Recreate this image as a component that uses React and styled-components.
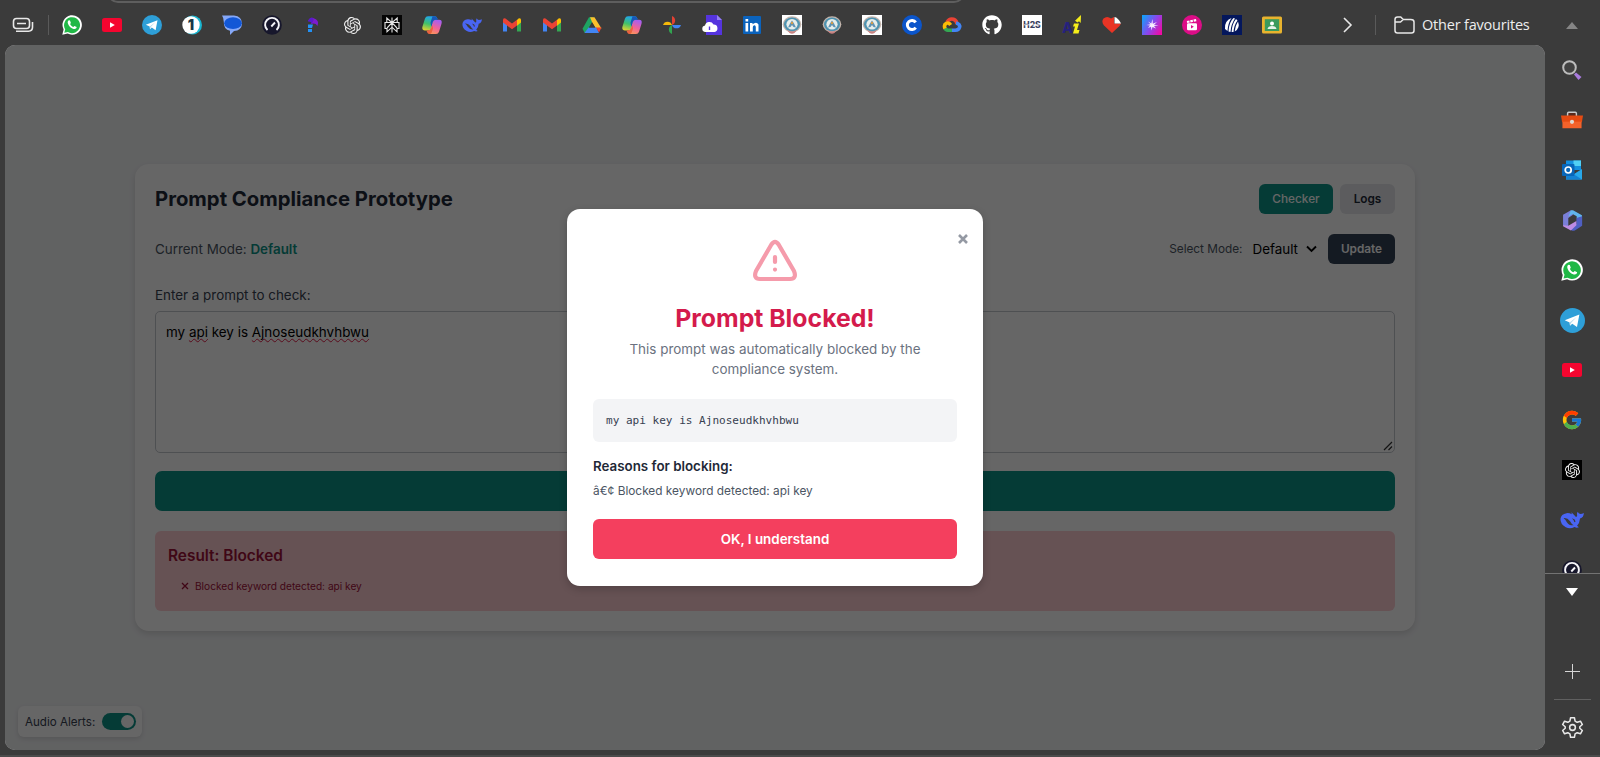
import React from "react";
import styled, { createGlobalStyle } from "styled-components";
import { FaGithub } from "react-icons/fa";
import { FcGoogle } from "react-icons/fc";
import { SiOpenai } from "react-icons/si";

const GlobalStyle = createGlobalStyle`
  * { box-sizing: border-box; }
  body { margin: 0; background: #3b3b3b; font-family: Inter, "Liberation Sans", sans-serif; overflow: hidden; }
  h1, h2, h3, p, ul { margin: 0; padding: 0; }
  button { font-family: inherit; border: 0; padding: 0; }
  svg { display: block; flex: none; }
`;

/* ---------- browser frame ---------- */
const Browser = styled.div`
  display: flex;
  width: 1600px;
  height: 755px;
`;
const MainColumn = styled.div`
  width: 1545px;
  display: flex;
  flex-direction: column;
`;
const AddressStrip = styled.div`
  height: 3px;
  overflow: hidden;
  padding-left: 107px;
`;
const AddressEdge = styled.div`
  width: 858px;
  height: 22px;
  margin-top: -19px;
  border: 2px solid #5e5e5e;
  border-radius: 12px;
`;
const BookmarksBar = styled.div`
  height: 42px;
  display: flex;
  align-items: center;
  padding: 2px 0 0 12px;
`;
const Divider = styled.span`
  width: 1px;
  height: 20px;
  margin-left: ${(p) => p.$left || 0}px;
  background: #5a5a5a;
`;
const Bookmarks = styled.div`
  display: flex;
  gap: 20px;
  margin-left: 13px;
`;
const Overflow = styled.span`
  margin: 0 21px 0 58px;
`;
const Folder = styled.div`
  display: flex;
  align-items: center;
  gap: 7px;
  margin-left: 18px;
  color: #ededed;
  font: 400 14.5px "Open Sans", "Noto Sans", sans-serif;
  letter-spacing: -0.2px;
  white-space: nowrap;
`;
const FolderName = styled.span`
  padding-bottom: 1px;
`;
const WindowEdge = styled.div`
  height: 2px;
  width: 1600px;
  background: #4b4b4b;
`;

/* ---------- side bar ---------- */
const SideBar = styled.aside`
  width: 55px;
  display: flex;
  flex-direction: column;
  align-items: center;
`;
const ScrollUp = styled.div`
  height: 45px;
  padding: 22px 1px 0 0;
`;
const SideApps = styled.div`
  width: 55px;
  height: 529px;
  padding-right: 1px;
  overflow: hidden;
  border-bottom: 1px solid #737373;
`;
const SideApp = styled.div`
  height: 50px;
  display: flex;
  align-items: center;
  justify-content: center;
`;
const SideTools = styled.div`
  display: flex;
  flex-direction: column;
  align-items: center;
  padding: 14px 1px 0 0;
`;
const SideRule = styled.div`
  width: 37px;
  height: 1px;
  background: #606060;
  margin: 20px 0 16px;
`;
const PlusSlot = styled.div`
  margin-top: 68px;
`;

/* ---------- page ---------- */
const Page = styled.main`
  position: relative;
  margin-left: 5px;
  width: 1540px;
  height: 705px;
  border-radius: 10px;
  overflow: hidden;
  background: #f3f4f6;
  display: flex;
  align-items: center;
  justify-content: center;
`;
const Card = styled.section`
  width: 1280px;
  height: 467px;
  padding: 20px;
  border-radius: 14px;
  background: #fff;
  box-shadow: 0 3px 6px rgba(0, 0, 0, 0.12);
`;
const Row = styled.div`
  display: flex;
  align-items: center;
  justify-content: space-between;
  height: 30px;
  margin-bottom: 20px;
`;
const Group = styled.div`
  display: flex;
  align-items: center;
  gap: ${(p) => p.$gap || 0}px;
`;
const Title = styled.h1`
  font-size: 20.3px;
  line-height: 28px;
  font-weight: 700;
  color: #1f2937;
`;
const tones = {
  teal: ["#0d9488", "#fff"],
  gray: ["#e5e7eb", "#1f2937"],
  slate: ["#334155", "#fff"],
};
const SmallButton = styled.button`
  height: 30px;
  width: ${(p) => p.$width}px;
  border-radius: 6px;
  font-size: 11.8px;
  font-weight: ${(p) => (p.$tone === "teal" ? 500 : 600)};
  background: ${(p) => tones[p.$tone][0]};
  color: ${(p) => tones[p.$tone][1]};
`;
const Mode = styled.p`
  font-size: 13.4px;
  color: #4b5563;
  strong { font-weight: 600; color: #0d9488; }
`;
const SelectLabel = styled.span`
  font-size: 11.8px;
  color: #4b5563;
`;
const Select = styled.div`
  display: flex;
  align-items: center;
  gap: 8px;
  margin: 0 11px 0 10px;
  font-size: 13.4px;
  color: #000;
`;
const FieldLabel = styled.label`
  display: block;
  font-size: 13.4px;
  line-height: 20px;
  color: #374151;
  margin: 21px 0 6px;
`;
const PromptField = styled.div`
  height: 142px;
  display: flex;
  justify-content: space-between;
  border: 1px solid #c4c8ce;
  border-radius: 5px;
  padding: 10px 1px 1px 10px;
  font-size: 13.45px;
  line-height: 20px;
  color: #000;
`;
const Misspelt = styled.span`
  text-decoration: underline wavy #e11d48 1px;
  text-underline-offset: 1px;
  text-decoration-skip-ink: none;
`;
const Grip = styled.svg`
  align-self: flex-end;
`;
const CheckButton = styled.button`
  display: block;
  width: 100%;
  height: 40px;
  margin: 18px 0 20px;
  border-radius: 7px;
  background: #0d9488;
`;
const Result = styled.div`
  height: 80px;
  padding: 14px 13px;
  border-radius: 6px;
  background: #ffccd3;
  color: #9f1239;
`;
const ResultTitle = styled.h2`
  font-size: 15.4px;
  line-height: 22px;
  font-weight: 600;
`;
const ResultItem = styled.p`
  display: flex;
  align-items: center;
  gap: 6px;
  margin: 11px 0 0 13px;
  font-size: 10.15px;
  line-height: 16px;
`;
const AudioAlerts = styled.div`
  position: absolute;
  left: 13px;
  bottom: 13px;
  width: 124px;
  height: 31px;
  display: flex;
  align-items: center;
  gap: 7px;
  padding-left: 7px;
  border-radius: 6px;
  background: #fff;
  box-shadow: 0 2px 5px rgba(0, 0, 0, 0.12);
  font-size: 11.6px;
  color: #374151;
  white-space: nowrap;
`;
const Toggle = styled.span`
  width: 34px;
  height: 17px;
  border-radius: 9px;
  background: #0d9488;
  display: flex;
  justify-content: flex-end;
  padding: 2px;
`;
const Knob = styled.span`
  width: 13px;
  height: 13px;
  border-radius: 50%;
  background: #fff;
`;

/* ---------- dialog ---------- */
const Backdrop = styled.div`
  position: absolute;
  inset: 0;
  display: flex;
  align-items: center;
  justify-content: center;
  background: rgba(0, 0, 0, 0.6);
`;
const Dialog = styled.div`
  position: relative;
  width: 416px;
  height: 377px;
  padding: 24px 26px 27px;
  border-radius: 13px;
  background: #fff;
  box-shadow: 0 3px 8px rgba(0, 0, 0, 0.2);
  display: flex;
  flex-direction: column;
`;
const Close = styled.span`
  position: absolute;
  top: 25px;
  right: 15px;
`;
const WarningIcon = styled.svg`
  align-self: center;
`;
const DialogTitle = styled.h2`
  margin-top: 15px;
  font-size: 24.8px;
  line-height: 32px;
  font-weight: 700;
  text-align: center;
  color: #d41b4c;
`;
const DialogText = styled.p`
  width: 320px;
  align-self: center;
  margin-top: 5px;
  font-size: 13.45px;
  line-height: 20px;
  text-align: center;
  color: #6b7280;
`;
const PromptQuote = styled.div`
  height: 43px;
  margin-top: 20px;
  padding: 0 13px;
  display: flex;
  align-items: center;
  border-radius: 6px;
  background: #f3f4f6;
  color: #374151;
  font: 11.05px "DejaVu Sans Mono", monospace;
`;
const ReasonsTitle = styled.h3`
  margin-top: 14px;
  font-size: 13.35px;
  line-height: 20px;
  font-weight: 600;
  color: #1f2937;
`;
const Reason = styled.p`
  margin-top: 6px;
  font-size: 11.85px;
  line-height: 18px;
  color: #4b5563;
`;
const Confirm = styled.button`
  height: 40px;
  margin-top: auto;
  border-radius: 6px;
  background: #f43f5e;
  color: #fff;
  font-size: 13.4px;
  font-weight: 600;
`;

/* ---------- icons ---------- */
const Icon = ({ size = 20, children }) => (
  <svg width={size} height={size} viewBox="0 0 20 20">{children}</svg>
);
const Glyph = styled.span`
  width: 20px;
  height: 20px;
  display: flex;
  align-items: center;
  justify-content: center;
  background: ${(p) => p.$bg || "none"};
  color: #f2f2f2;
`;
const WhatsAppLogo = ({ size }) => (
  <Icon size={size}>
    <path d="M.3 19.800 1.600 14.500A9.700 9.700 0 1 1 5.600 18.500Z" fill="#fff" />
    <path d="m2.300 17.800.9-3.500A8 8 0 1 1 5.900 17Z" fill="#20b846" />
    <path d="M7 5.300c-1.300.5-1.700 2-.9 3.700 1 2.500 3 4.300 5.500 5 1.700.4 3-.4 3.100-1.900l-2.300-1.200-1.100 1.200c-1.600-.7-2.500-1.600-3.200-3l.8-1.200L8 5.400Z" fill="#fff" />
  </Icon>
);
const YouTubeLogo = () => (
  <Icon>
    <rect x="0" y="3" width="20" height="14" rx="2.500" fill="#f5052f" />
    <path d="m8 7.300 4.800 2.700L8 12.700Z" fill="#fff" />
  </Icon>
);
const TelegramLogo = ({ size }) => (
  <Icon size={size}>
    <circle cx="10" cy="10" r="10" fill="#2e9fd8" />
    <path d="M3.800 9.800 15.500 5.200 13.600 15.200 9.800 12.500 8 14.200 7.700 11.500Z" fill="#fff" />
    <path d="m7.700 11.500 5.600-4.300-4.300 4.600-1 2.400Z" fill="#b5d9ec" />
  </Icon>
);
const OneLogo = () => (
  <Icon>
    <circle cx="10.500" cy="10" r="9.500" fill="#19b7d2" />
    <circle cx="9" cy="10" r="8.700" fill="#fff" />
    <text x="8.900" y="15.200" textAnchor="middle" fontFamily="Inter" fontSize="14" fontWeight="900" fill="#173748">1</text>
  </Icon>
);
const MessagesLogo = () => (
  <Icon>
    <path d="M0 .5H12Q20 1 20 9 19.500 15.500 12 16L8 20V15.800Q1.500 14.500 1.800 7 1.800 3 0 .5Z" fill="#85a8f8" />
    <ellipse cx="11" cy="8.200" rx="8.800" ry="5.900" fill="#1257d6" />
  </Icon>
);
const SpeedLogo = () => (
  <Icon>
    <circle cx="10" cy="10" r="9.800" fill="#17172c" />
    <path d="M5.500 15A6.900 6.900 0 1 1 14.500 15M9.300 11.500 13 7.500" fill="none" stroke="#f4f4f8" strokeWidth="1.900" />
  </Icon>
);
const HookLogo = () => (
  <Icon>
    <path d="M6 5.500Q9 .5 12 4L10 8.500Q8.500 6 6 6.500Z" fill="#5b19cf" />
    <path d="M11 3Q18 5 15.500 11 13 7 8 9.500Q12.500 6 11 3Z" fill="#7d1bd0" />
    <path d="M6 9.500h5L10 13H6zM6 14h4v3H6z" fill="#2391f4" />
  </Icon>
);
const PerplexityLogo = () => (
  <Icon>
    <rect width="20" height="20" fill="#050505" />
    <path d="M10 2.500v15M4.800 3v4.500h10.400V3L10 7.700ZM3 7.500h14v6h-2v3.300l-5-4.600-5 4.600v-3.300H3ZM10 7.700l-5 5.300M10 7.700l5 5.300" fill="none" stroke="#e5e5e5" strokeWidth="1.100" />
  </Icon>
);
const CopilotLogo = () => (
  <Icon>
    <defs>
      <linearGradient id="copLeft" x1=".4" y1="0" x2=".1" y2="1">
        <stop offset="0" stopColor="#20a5ee" /><stop offset=".5" stopColor="#40c06a" /><stop offset="1" stopColor="#f0d32c" />
      </linearGradient>
      <linearGradient id="copRight" x1=".6" y1="0" x2=".2" y2="1">
        <stop offset="0" stopColor="#a65ff0" /><stop offset=".5" stopColor="#f0629a" /><stop offset="1" stopColor="#fb9a55" />
      </linearGradient>
    </defs>
    <path d="M6 1.200h7q2 0 2.500 2.800L12 5.500 9.300 13q-.7 2.500-3.300 2.500H3Q-.5 15.500.500 11.500L3 3.500q.7-2.300 3-2.300Z" fill="url(#copLeft)" />
    <path d="M14 19H8q-2 0-2.500-2.800L8.500 14.500 10.700 7Q11.400 4.700 14 4.700h3q3.500 0 2.500 4L17 16.700q-.7 2.300-3 2.300Z" fill="url(#copRight)" />
    <path d="M10.500 1.200H13q2 0 2.700 3.500H14q-2.500 0-3.200 2L9.300 12 8.500 7.500Z" fill="#1757b8" />
    <path d="M4.500 15.500H6q2.600 0 3.300-2.500l.9-3 .8 3.500-1.300 4Q9.200 19 7.500 19 5.500 19 4.500 15.500Z" fill="#e9633f" />
  </Icon>
);
const WhaleLogo = ({ size }) => (
  <Icon size={size}>
    <path d="M9.500 3.500q2 2 3.800 3.900 1-.2 1-1-.5-2 .4-3.200.8 1.600 2.200 1.800 1.500 0 3-.8-.2 3.800-3.200 4.500-.3 3.700-2.500 6l1.500 1.300q-1.600.8-3.600-.1-3.700 2-7.300.2Q.2 13.600.4 9 .9 5 5.500 4.300q2-.3 4.300.9Z" fill="#4965f2" />
    <path d="M3 8.500q3-.5 5.400 2.500 1.400 2.700 3 3.400-3.500.5-5.700-2.600Q4.500 9.500 3 8.500ZM10 8.800q2.300-.2 3 2.400l-1 .6Q11.500 9.800 10 8.800Z" fill="#3b3b3b" />
  </Icon>
);
const GmailLogo = () => (
  <Icon>
    <path d="M1 5V16.500h4V8Z" fill="#4285f4" />
    <path d="M19 5V16.500h-4V8Z" fill="#34a853" />
    <path d="M15 4.900 16.500 3.600q2.500-1 2.500 1.400v2.500l-4 3.200Z" fill="#fbbc04" />
    <path d="M1 5Q1 2.600 3.500 3.600L10 8.500l5-3.700v5.700l-5 3.800-5-3.800-4-3Z" fill="#ea4335" />
  </Icon>
);
const DriveLogo = () => (
  <Icon>
    <path d="M7 2.200h4.500L10.200 7 4.500 17 2.700 18 .5 13.700Z" fill="#1ea362" />
    <path d="M8 2.200h4.500L19.500 13.500H14L10 7Z" fill="#fbc02d" />
    <path d="M6.500 12.500h8l2.500 5.500H2.500Z" fill="#4285f4" />
    <path d="M14 12.500h5.500L17 17.500Z" fill="#ea4335" />
    <path d="m10 7.500 3 5H7Z" fill="#3b3b3b" />
  </Icon>
);
const PhotosLogo = () => (
  <Icon>
    <path d="M10 10V1a4.800 4.800 0 0 1 0 9Z" fill="#e34133" />
    <path d="M10 10H1a4.700 4.700 0 0 1 9 0Z" fill="#f6b90a" />
    <path d="M10 10v9a4.800 4.800 0 0 1 0-9Z" fill="#32a350" />
    <path d="M10 10h9a4.700 4.700 0 0 1-9 0Z" fill="#4285f4" />
  </Icon>
);
const CloudDocLogo = () => (
  <Icon>
    <path d="M4 0h11l5 5v15H4Z" fill="#5534de" />
    <path d="M15 0v5h5Z" fill="#9580f5" />
    <path d="M3 17a3.300 3.300 0 0 1 0-6.500A4.600 4.600 0 0 1 11.500 9.500a3.800 3.800 0 0 1 1 7.500Z" fill="#fff" />
    <path d="M7.500 15v-3.500" stroke="#5534de" strokeWidth="1.400" />
  </Icon>
);
const LinkedInLogo = () => (
  <Icon>
    <rect x="1" y="1" width="18" height="18" rx="1" fill="#0b63bd" />
    <path d="M3.500 8h2.700v8.500H3.500zM3.500 4h2.700v2.500H3.500zM8 8h2.500v1.300Q14.500 6 16.500 9.500v7h-2.700V12q-.3-2.300-2-1.500-1 .4-1 2v4H8Z" fill="#fff" />
  </Icon>
);
const CrestLogo = ({ framed }) => (
  <Icon>
    {framed && <rect width="20" height="20" fill="#fff" />}
    <ellipse cx="10" cy="9.300" rx="9.300" ry="8" fill="#c3b5ad" />
    <ellipse cx="10" cy="9.300" rx="8" ry="6.900" fill="#4f93b0" />
    <ellipse cx="10" cy="9.200" rx="5.600" ry="5.200" fill="#e6eeec" />
    <path d="m6 12.500 2-4 2-3 2 3 2 4-2.500-.5L10 10l-1.500 2Z" fill="#5f93b4" />
    <circle cx="10" cy="8" r="1.200" fill="#d49b4a" />
    <path d="M5 15q5 3 10 0l-2.500 3q-2.500 1.500-5 0Z" fill="#c98282" />
  </Icon>
);
const CLogo = () => (
  <Icon>
    <circle cx="10" cy="10" r="10" fill="#0b55cb" />
    <path d="M13.700 7.300a4.600 4.600 0 1 0 0 5.400" fill="none" stroke="#fff" strokeWidth="3" />
  </Icon>
);
const CloudLogo = () => (
  <Icon>
    <g fill="none" strokeWidth="3.600">
      <path d="M5 7.200Q7.500 3 11.500 4.300 14.800 5.500 15 9" stroke="#ea4335" />
      <path d="M14 8q4.500 1 3.500 4.500-.9 2.700-4 2.700h-3.700" stroke="#4285f4" />
      <path d="M10 15.200H6Q3.600 15 2.800 13" stroke="#34a853" />
      <path d="M3 13.500Q1.500 9.800 4.300 8.300 7 7.200 8.600 10" stroke="#fbbc05" />
    </g>
  </Icon>
);
const EventLogo = () => (
  <Icon>
    <rect width="20" height="20" fill="#fff" />
    <text x="10" y="13" textAnchor="middle" fontFamily="Inter" fontSize="8.500" fontWeight="800" fill="#39405e">H2S</text>
    <path d="M2 9.800h16" stroke="#fff" strokeWidth=".8" />
  </Icon>
);
const AiLogo = () => (
  <Icon>
    <text x="0" y="18" fontFamily="Inter" fontSize="14" fontWeight="800" fill="#26217c">A</text>
    <path d="m19 0-.3 8-1.700-1.700-1.500 1.200-2.500-1.700ZM12 8.500h5l-2 6.500h2.500l-1 3.500H11l2-7h-2Z" fill="#f5ee1b" />
  </Icon>
);
const HeartLogo = () => (
  <Icon>
    <path d="M10 18 2 10.500Q-1 6.500 1.500 3.500 5 .5 9 3.500L12 2v6.500h7L17.500 11Z" fill="#e93425" />
    <path d="M12.500 2q3.500.5 6.500 6.500h-6.500Z" fill="#fff" />
  </Icon>
);
const SparkLogo = () => (
  <Icon>
    <defs>
      <linearGradient id="spark" x1="0" y1=".2" x2="1" y2=".8">
        <stop offset="0" stopColor="#179cfa" /><stop offset=".5" stopColor="#8a47ed" /><stop offset="1" stopColor="#f00ba4" />
      </linearGradient>
    </defs>
    <rect width="20" height="20" fill="url(#spark)" />
    <path d="m10.500 4 .3 4.700L15 7l-3 2.700 4.500.5-4.500.8 2 2.500-3.500-1.500-1 3.500-.5-3.800L6 13l2-2.500-3.500-.5 4-.8L6 6.500l3.300 2Z" fill="#f7edff" />
  </Icon>
);
const ReelsLogo = () => (
  <Icon>
    <circle cx="10" cy="10" r="10" fill="#dc0d87" />
    <rect x="5" y="8.200" width="10" height="7" rx="1.200" fill="#fff" />
    <path d="m5 7 9.500-2" stroke="#fff" strokeWidth="2.200" strokeDasharray="2.600 .8" />
    <path d="m9 10 2.800 1.700L9 13.400Z" fill="#dc0d87" />
  </Icon>
);
const FanLogo = () => (
  <Icon>
    <rect width="20" height="20" fill="#04175c" />
    <g fill="#fff">
      <path d="M3 14Q2 6 9.500 3 6 8 5.500 16Z" /><path d="M6.500 16.500Q7 7 11.500 3L13 3.500Q9 9 8.500 17Z" />
      <path d="M9.600 17Q10 9 14 4l1.500 1.500Q12 10 11.500 17Z" /><path d="M12.700 16.500Q13 11 16 6.500 18.500 13 12.700 16.500Z" />
    </g>
  </Icon>
);
const ClassroomLogo = () => (
  <Icon>
    <rect x="0" y="1.500" width="20" height="17" rx="1.500" fill="#e8b32e" />
    <rect x="2.800" y="4.200" width="14.400" height="11.800" fill="#3a9a5c" />
    <circle cx="10" cy="8.400" r="2" fill="#fff" />
    <path d="M5.500 14q.5-3 4.500-3t4.500 3Z" fill="#e6f2ea" />
  </Icon>
);
const OpenAiMark = ({ boxed }) => (
  <Glyph $bg={boxed && "#000"}><SiOpenai size={boxed ? 15 : 17} /></Glyph>
);
const SearchLogo = () => (
  <Icon>
    <path d="m14 12.500 5.500 4.500-3 3-4.500-5.500Z" fill="#a97bdd" />
    <circle cx="7.500" cy="7.500" r="6.300" fill="#424242" stroke="#bdbdbd" strokeWidth="2" />
  </Icon>
);
const ToolboxLogo = () => (
  <Icon size={22}>
    <path d="M6 7V4q0-1 1-1h6q1 0 1 1v3" fill="#5a2a1c" stroke="#c9c9c9" strokeWidth="1.300" />
    <path d="M0 6h20l-1 6H1Z" fill="#e64b12" />
    <path d="M1.300 11.500h17.400V17.500H1.300Z" fill="#f4622a" />
    <circle cx="10" cy="11.700" r="1.900" fill="#ded8d0" />
  </Icon>
);
const OutlookLogo = () => (
  <Icon>
    <path d="M4 .5h15V10H4Z" fill="#1490df" /><path d="M11.500.5H19V6h-7.500Z" fill="#50d0f5" />
    <path d="m5 10 7 4 8-5v10.500H4Z" fill="#28a8ea" /><path d="m5 10 15 9.500H4Z" fill="#1481d2" />
    <rect x="0" y="4" width="12.500" height="12" rx="1" fill="#0866b9" />
    <circle cx="6.200" cy="10" r="3" fill="none" stroke="#fff" strokeWidth="1.700" />
  </Icon>
);
const M365Logo = () => (
  <Icon size={21}>
    <path d="M8.500.300 1 4.500V15l5 1.500V7.500l4.500-3Z" fill="#7a7fd8" />
    <path d="M8.500.300h2L19 5v5.500l-5-2.800V6l-4-2.200L6 6.500Z" fill="#61b5ed" />
    <path d="M19.200 6v9l-7 4.500q-2 .8-3.500-.5l-3-2 8-4V7.700Z" fill="#4f5fc2" />
    <path d="m1 14.500 5 .5 7.700-4.500v4L8.500 19.500 1 15.500Z" fill="#bd8ce3" />
  </Icon>
);
const GearIcon = () => (
  <svg width="23" height="23" viewBox="0 0 24 24" fill="none" stroke="#e8e8e8" strokeWidth="1.600" strokeLinejoin="round">
    <path d="M10 1.800h4l.7 3.500 2.200 1.300 3.400-1.200 2 3.500L19.600 11.200v1.600l2.700 2.300-2 3.500-3.400-1.200-2.200 1.300-.7 3.500h-4l-.7-3.500-2.200-1.300-3.400 1.200-2-3.500 2.700-2.300v-1.600L1.700 8.900l2-3.500 3.400 1.200 2.200-1.300Z" />
    <circle cx="12" cy="12" r="3" />
  </svg>
);

const bookmarkIcons = [
  WhatsAppLogo, YouTubeLogo, TelegramLogo, OneLogo, MessagesLogo, SpeedLogo, HookLogo,
  OpenAiMark, PerplexityLogo, CopilotLogo, WhaleLogo, GmailLogo, GmailLogo, DriveLogo,
  CopilotLogo, PhotosLogo, CloudDocLogo, LinkedInLogo,
  () => <CrestLogo framed />, CrestLogo, () => <CrestLogo framed />,
  CLogo, CloudLogo, () => <Glyph><FaGithub size={20} color="#fff" /></Glyph>, EventLogo,
  AiLogo, HeartLogo, SparkLogo, ReelsLogo, FanLogo, ClassroomLogo,
];
const sideIcons = [
  SearchLogo, ToolboxLogo, OutlookLogo, M365Logo,
  () => <WhatsAppLogo size={22} />, () => <TelegramLogo size={25} />, YouTubeLogo,
  () => <FcGoogle size={22} />, () => <OpenAiMark boxed />, () => <WhaleLogo size={24} />, SpeedLogo,
];

export default function App() {
  return (
    <>
      <GlobalStyle />
      <Browser>
        <MainColumn>
          <AddressStrip><AddressEdge /></AddressStrip>
          <BookmarksBar>
            <svg width="22" height="20" viewBox="0 0 22 20" fill="none" stroke="#e8e8e8" strokeWidth="1.600">
              <rect x="1.500" y="3.500" width="16" height="10" rx="3" />
              <path d="M5 8.500h9M4 16.300h12.500q4-.3 4-4V7" />
            </svg>
            <Divider $left={14} />
            <Bookmarks>
              {bookmarkIcons.map((Logo, i) => <Logo key={i} />)}
            </Bookmarks>
            <Overflow>
              <svg width="14" height="18" viewBox="0 0 14 18" fill="none" stroke="#e8e8e8" strokeWidth="1.600"><path d="m4 2 7 7-7 7" /></svg>
            </Overflow>
            <Divider />
            <Folder>
              <svg width="21" height="20" viewBox="0 0 21 20" fill="none" stroke="#e8e8e8" strokeWidth="1.500">
                <path d="M1 4.500Q1 2 3.500 2h3.200l2.600 2.500h7.500Q20 4.500 20 7v8.500q0 2.500-2.500 2.500h-14Q1 18 1 15.500ZM1 7h5.500l2.800-2.500" />
              </svg>
              <FolderName>Other favourites</FolderName>
            </Folder>
          </BookmarksBar>

          <Page>
            <Card>
              <Row>
                <Title>Prompt Compliance Prototype</Title>
                <Group $gap={7}>
                  <SmallButton $tone="teal" $width={74}>Checker</SmallButton>
                  <SmallButton $tone="gray" $width={55}>Logs</SmallButton>
                </Group>
              </Row>
              <Row>
                <Mode>Current Mode: <strong>Default</strong></Mode>
                <Group>
                  <SelectLabel>Select Mode:</SelectLabel>
                  <Select>
                    Default
                    <svg width="11" height="8" viewBox="0 0 11 8" fill="none" stroke="#000" strokeWidth="1.900"><path d="m1 1.500 4.500 4.500L10 1.500" /></svg>
                  </Select>
                  <SmallButton $tone="slate" $width={67}>Update</SmallButton>
                </Group>
              </Row>
              <FieldLabel>Enter a prompt to check:</FieldLabel>
              <PromptField>
                <span>my <Misspelt>api</Misspelt> key is <Misspelt>Ajnoseudkhvhbwu</Misspelt></span>
                <Grip width="10" height="10" viewBox="0 0 10 10" stroke="#333" strokeWidth="1.200"><path d="m1 9 8-8M5.500 9 9 5.500" /></Grip>
              </PromptField>
              <CheckButton />
              <Result>
                <ResultTitle>Result: Blocked</ResultTitle>
                <ResultItem>
                  <svg width="8" height="8" viewBox="0 0 8 8" stroke="#9f1239" strokeWidth="1.300"><path d="m1 1 6 6M7 1 1 7" /></svg>
                  Blocked keyword detected: api key
                </ResultItem>
              </Result>
            </Card>
            <AudioAlerts>
              Audio Alerts:
              <Toggle><Knob /></Toggle>
            </AudioAlerts>

            <Backdrop>
              <Dialog>
                <Close>
                  <svg width="10" height="10" viewBox="0 0 10 10" stroke="#9499a3" strokeWidth="2.600"><path d="m1 1 8 8M9 1 1 9" /></svg>
                </Close>
                <WarningIcon width="54" height="54" viewBox="0 0 54 54" fill="none" stroke="#f59bab" strokeWidth="4.200" strokeLinecap="round" strokeLinejoin="round">
                  <path d="M23.400 11.500Q27 6.300 30.600 11.500L46 38Q49 45.800 42 46H12Q5 45.800 8 38Z" />
                  <path d="M27 24v5M27 36.500v.1" />
                </WarningIcon>
                <DialogTitle>Prompt Blocked!</DialogTitle>
                <DialogText>This prompt was automatically blocked by the compliance system.</DialogText>
                <PromptQuote>my api key is Ajnoseudkhvhbwu</PromptQuote>
                <ReasonsTitle>Reasons for blocking:</ReasonsTitle>
                <Reason>â€¢ Blocked keyword detected: api key</Reason>
                <Confirm>OK, I understand</Confirm>
              </Dialog>
            </Backdrop>
          </Page>
        </MainColumn>

        <SideBar>
          <ScrollUp><svg width="12" height="7" viewBox="0 0 12 7"><path d="M6 0 12 7H0Z" fill="#858585" /></svg></ScrollUp>
          <SideApps>
            {sideIcons.map((Logo, i) => <SideApp key={i}><Logo /></SideApp>)}
          </SideApps>
          <SideTools>
            <svg width="12" height="8" viewBox="0 0 12 8"><path d="M0 0h12L6 8Z" fill="#fff" /></svg>
            <PlusSlot><svg width="15" height="15" viewBox="0 0 15 15" stroke="#d5d5d5"><path d="M7.500 0v15M0 7.500h15" /></svg></PlusSlot>
            <SideRule />
            <GearIcon />
          </SideTools>
        </SideBar>
      </Browser>
      <WindowEdge />
    </>
  );
}
